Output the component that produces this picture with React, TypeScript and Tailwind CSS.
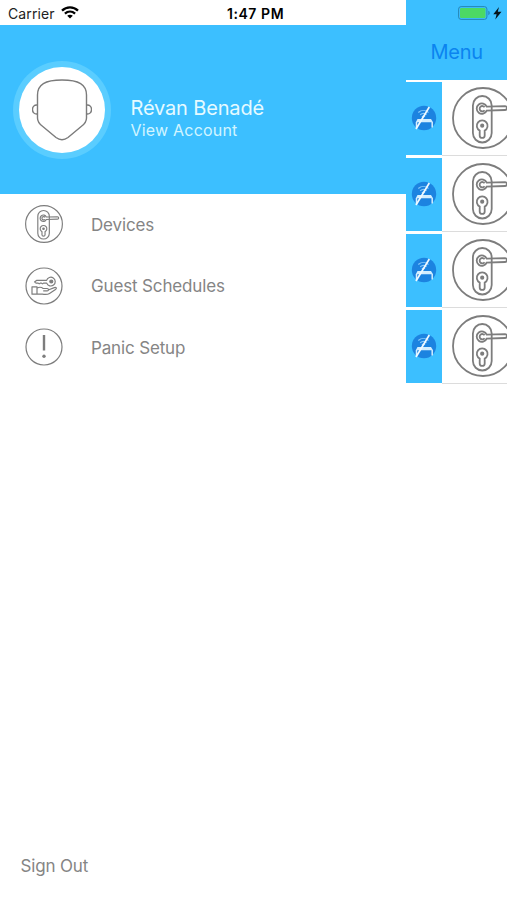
import { ReactNode } from 'react';

const DoorLockIcon = ({ className, strokeWidth = 1.5 }: { className?: string; strokeWidth?: number }) => (
  <svg viewBox="0 0 62 62" className={className} fill="none" stroke="#7d7d7d" strokeWidth={strokeWidth}>
    <circle cx="31" cy="31" r="30" />
    <rect x="20.9" y="9" width="18.8" height="46.5" rx="9.4" />
    <path d="M34.7 19.6 53 19.2a1.9 1.9 0 0 1 0 3.8L34.7 23.6a5.2 5.2 0 1 1 0-4Z" />
    <path d="M32.6 20.2a2.7 2.7 0 1 0 0 3" />
    <path d="M27.7 43.6a5.4 5.4 0 1 1 5 0V48.4a2.5 2.5 0 0 1-5 0Z" />
    <circle cx="30.2" cy="38.7" r="1.2" fill="#7d7d7d" />
  </svg>
);

const GuestIcon = () => (
  <svg viewBox="0 0 38 38" className="size-[38px]" fill="none" stroke="#7d7d7d" strokeWidth="1.2" strokeLinejoin="round">
    <circle cx="19" cy="19" r="18" />
    <path d="M21.6 13.4H11.5l-2 1.5 1.5 1.2h2.2l1 .8 1-.8h1.3l1 .8 1-.8h3.2a4.4 4.4 0 1 0-.1-2.7Z" />
    <circle cx="26.3" cy="14.5" r="1.5" fill="#7d7d7d" />
    <path d="M7 19.8h5v7.4H7ZM12 21.2c2.4-1.5 4.3-1.2 6.2.3h4c1.7 0 1.7 2.4 0 2.4h-4M23.8 22.8l5.6-2.2c1.9-.5 2.7.7 1.1 1.8l-6 4c-2.3 1.5-5.3 1-7.3.7H12" />
  </svg>
);

const PanicIcon = () => (
  <svg viewBox="0 0 38 38" className="size-[38px]" fill="none" stroke="#7d7d7d">
    <circle cx="19" cy="19" r="18" strokeWidth="1.2" />
    <path d="M19 7v15.5" strokeWidth="2.4" />
    <circle cx="19" cy="28.2" r="1.7" fill="#7d7d7d" stroke="none" />
  </svg>
);

const FaceIcon = () => (
  <svg viewBox="0 0 60 62" className="h-[62px] w-[60px]" fill="none" stroke="#7b7b7b" strokeWidth="1.4">
    <path d="M5.5 16C5.5 5.5 13 1 30 1s24.5 4.5 24.5 15v23c0 4-2 6-5 8.3L36 58.5c-4 3-8 3-12 0L10.5 47.3c-3-2.3-5-4.3-5-8.3Z" />
    <path d="M5.5 26C-1.2 25-1.2 36 5.5 35M54.5 26c6.7-1 6.7 10 0 9" />
  </svg>
);

const OfflineIcon = () => (
  <svg viewBox="0 0 26 26" className="size-[26px]" fill="none">
    <circle cx="13" cy="13" r="12.2" fill="#1c83e0" />
    <path d="M7.3 7.5c3-2.7 7.2-2.7 10.2 0M9.2 9.7c2-1.7 4.5-1.7 6.3 0M10.8 11.9c1-.8 2.3-.8 3.2 0" stroke="#85c8fa" strokeWidth="1.2" />
    <path d="M5.5 22.5v-5.5M21.2 22.5v-5.5" stroke="#d3eeff" strokeWidth="1.5" />
    <path d="M4.8 17.3 6.5 14h13.5l2 3.3Z" fill="#d3eeff" />
    <path d="M5 24 18.3 2" stroke="#f2faff" strokeWidth="1.7" />
  </svg>
);

const WifiIcon = () => (
  <svg viewBox="0 0 18 13" className="h-[13px] w-[18px]" fill="none" stroke="#000" strokeWidth="2.3">
    <path d="M1 4.6c4.5-4.3 11.5-4.3 16 0M3.9 7.7c3-2.7 7.2-2.7 10.2 0" />
    <path d="M9 12.6 6.2 9.8c1.6-1.5 4-1.5 5.6 0Z" fill="#000" stroke="none" />
  </svg>
);

const BatteryIcon = () => (
  <svg viewBox="0 0 44 14" className="h-[14px] w-11" fill="none">
    <rect x=".6" y=".6" width="28.3" height="12.8" rx="2.5" stroke="#2686b5" />
    <rect x="2" y="2" width="25.5" height="10" rx="1.3" fill="#4cd964" />
    <path d="M30.3 4.8c1.9.4 1.9 4 0 4.4Z" fill="#2686b5" />
    <path d="M41 1 35.3 8.2h3.3L37.3 13.5l6.2-7.7h-3.7Z" fill="#06141c" />
  </svg>
);

const MenuItem = ({ icon, label }: { icon: ReactNode; label: string }) => (
  <li className="flex h-[61.5px] items-center pl-[24.5px]">
    {icon}
    <span className="ml-[28.5px] pt-px text-[17px] leading-6 tracking-[-0.15px]">{label}</span>
  </li>
);

const DeviceRow = () => (
  <div className="flex h-[76px] pb-[2.5px]">
    <div className="flex w-9 shrink-0 items-center justify-center bg-[#3cbfff]">
      <OfflineIcon />
    </div>
    <div className="flex flex-1 items-center overflow-hidden pl-[9.5px] shadow-[0_1px_0_#dcdcdc]">
      <DoorLockIcon className="size-[62px] shrink-0" strokeWidth={1.8} />
    </div>
  </div>
);

const App = () => {
  return (
    <div className="flex h-[900px] w-[507px] overflow-hidden bg-white font-['Inter','Liberation_Sans',sans-serif] text-[#858585]">
      <aside className="flex w-[406px] shrink-0 flex-col">
        <div className="flex h-[25px] items-center pl-2 text-[14px] text-[#222]">
          <span className="w-[53px] pt-px tracking-[0.1px]">Carrier</span>
          <WifiIcon />
          <span className="ml-[148px] pt-px font-semibold tracking-[0.55px] whitespace-nowrap text-black">1:47 PM</span>
        </div>

        <div className="flex h-[168.5px] shrink-0 bg-[#3cbfff] pt-[36px] pl-[13px]">
          <div className="flex size-[98px] items-center justify-center rounded-full bg-[#5acdff]">
            <div className="flex size-[86px] items-center justify-center rounded-full bg-white">
              <FaceIcon />
            </div>
          </div>
          <div className="ml-[19.5px] pt-[35px] text-[#e6faff]">
            <p className="text-[20px] leading-[25px] tracking-[-0.15px]">Révan Benadé</p>
            <p className="-mt-px text-[16px] leading-5 tracking-[0.2px] text-[#d2f5ff]">View Account</p>
          </div>
        </div>

        <ul>
          <MenuItem icon={<DoorLockIcon className="size-[38px]" strokeWidth={1.9} />} label="Devices" />
          <MenuItem icon={<GuestIcon />} label="Guest Schedules" />
          <MenuItem icon={<PanicIcon />} label="Panic Setup" />
        </ul>

        <button className="mt-auto mb-[22px] ml-[20.5px] self-start text-[17px] leading-6 tracking-[-0.15px]">Sign Out</button>
      </aside>

      <main className="min-w-0 flex-1">
        <div className="mb-[2px] h-[79.5px] bg-[#3cbfff]">
          <div className="flex h-[26px] items-center justify-end pr-[4.6px]">
            <BatteryIcon />
          </div>
          <p className="pt-[12px] pl-[24.5px] text-[20px] leading-7 tracking-[-0.3px] text-[#0b84ef]">Menu</p>
        </div>
        <DeviceRow />
        <DeviceRow />
        <DeviceRow />
        <DeviceRow />
      </main>
    </div>
  );
};

export default App;
